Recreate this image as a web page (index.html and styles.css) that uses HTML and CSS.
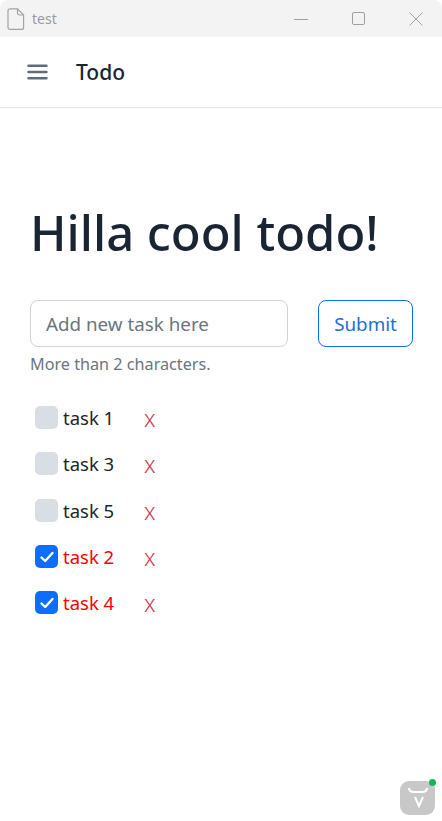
FILE: index.html
```html
<!DOCTYPE html>
<html lang="en">
<head>
  <meta charset="UTF-8">
  <title>test</title>
  <link rel="stylesheet" href="styles.css">
</head>
<body>

  <div class="titlebar">
    <svg class="file-icon" width="18" height="22" viewBox="0 0 18 22" fill="none" stroke="#a3a3a3" stroke-width="1.2">
      <path d="M3 .8h7.500L16.600 7v12.400a2 2 0 0 1-2 2H3a2 2 0 0 1-2-2V2.800a2 2 0 0 1 2-2z"/>
      <path d="M10.500 .8V5a2 2 0 0 0 2 2h4.100"/>
    </svg>
    <span class="window-title">test</span>
    <div class="window-controls">
      <svg width="14" height="14" viewBox="0 0 14 14" stroke="#a0a0a0" fill="none"><path d="M0 7.500h14"/></svg>
      <svg width="14" height="14" viewBox="0 0 14 14" stroke="#a0a0a0" fill="none"><rect x=".5" y=".5" width="12" height="12" rx="1.500"/></svg>
      <svg width="14" height="14" viewBox="0 0 14 14" stroke="#a0a0a0" fill="none"><path d="M.5 .5l13 13M13.500 .5l-13 13"/></svg>
    </div>
  </div>

  <nav class="navbar">
    <svg class="menu-icon" width="22" height="16" viewBox="0 0 22 16" stroke="#5f6b7a" stroke-width="2.400" stroke-linecap="round">
      <path d="M1.500 1.800h18M1.500 8h18M1.500 14.200h18"/>
    </svg>
    <span class="brand">Todo</span>
  </nav>

  <main class="content">
    <h1>Hilla cool todo!</h1>

    <div class="new-task">
      <input type="text" class="task-input" placeholder="Add new task here">
      <button class="submit">Submit</button>
    </div>
    <p class="help">More than 2 characters.</p>

    <ul class="tasks">
      <li class="task"><span class="box"></span><span class="name">task 1</span><span class="remove">x</span></li>
      <li class="task"><span class="box"></span><span class="name">task 3</span><span class="remove">x</span></li>
      <li class="task"><span class="box"></span><span class="name">task 5</span><span class="remove">x</span></li>
      <li class="task done">
        <span class="box"><svg width="16" height="14" viewBox="0 0 16 14" fill="none" stroke="#fff" stroke-width="2.400" stroke-linecap="round" stroke-linejoin="round"><path d="M2.500 7.500l3.700 3.500L13.500 3"/></svg></span>
        <span class="name">task 2</span><span class="remove">x</span>
      </li>
      <li class="task done">
        <span class="box"><svg width="16" height="14" viewBox="0 0 16 14" fill="none" stroke="#fff" stroke-width="2.400" stroke-linecap="round" stroke-linejoin="round"><path d="M2.500 7.500l3.700 3.500L13.500 3"/></svg></span>
        <span class="name">task 4</span><span class="remove">x</span>
      </li>
    </ul>
  </main>

  <div class="dev-badge">
    <svg width="20" height="24" viewBox="0 0 20 24" fill="none" stroke="#fff" stroke-width="2">
      <path d="M1 2c0 3 2 4 5 4h8c3 0 5-1 5-4"/>
      <path d="M7 11l4 9 4-9"/>
    </svg>
    <span class="dev-dot"></span>
  </div>

</body>
</html>
```

FILE: styles.css
```css
* { box-sizing: border-box; }
html, body { height: 100%; }
body { margin: 0; background: #fff; font-family: "Noto Sans", "Open Sans", sans-serif; color: #1a2433; overflow: hidden; }

.titlebar { height: 37px; background: #f3f3f3; display: flex; align-items: center; padding-left: 7px; border-radius: 8px 8px 0 0; }
.file-icon { flex: none; }
.window-title { margin-left: 7px; font-size: 14px; color: #9a9a9a; }
.window-controls { margin-left: auto; display: flex; gap: 43px; padding-right: 19px; }
.window-controls svg:first-child { margin-right: 1px; }

.navbar { height: 71px; display: flex; align-items: center; padding-left: 27px; border-bottom: 1px solid #e6e6e6; }
.brand { margin-left: 27px; font-size: 21px; font-weight: 500; }

.content { padding: 0 29px 0 30px; }
h1 { margin: 90px 0 0; font-size: 48.900px; line-height: 68px; font-weight: 500; }

.new-task { display: flex; justify-content: space-between; margin-top: 34px; }
.task-input { width: 258px; height: 47px; padding: 0 15px; border: 1px solid #ced4da; border-radius: 8px; font: inherit; font-size: 18.800px; color: #1a2433; }
.task-input::placeholder { color: #6c757d; opacity: 1; }
.submit { width: 95px; height: 47px; padding: 0; border: 1px solid #0d6efd; border-radius: 8px; background: #fff; color: #1a6fd8; font: inherit; font-size: 18.800px; }

.help { margin: 5px 0 0; font-size: 16.200px; line-height: 24px; color: #6c757d; }

.tasks { list-style: none; margin: 18.500px 0 0; padding: 0; }
.task { display: flex; align-items: center; height: 46.300px; padding-left: 5px; font-size: 18.500px; color: #212529; }
.box { flex: none; width: 23px; height: 23px; border-radius: 5px; background: #d8dee4; display: flex; align-items: center; justify-content: center; }
.name { width: 82px; margin-left: 5px; }
.remove { color: #d23a4c; font-size: 23px; font-weight: 300; line-height: 1; margin: 2px 0 0 -1px; }
.done .box { background: #0d6efd; }
.done .name { color: #f00; }

.dev-badge { position: absolute; right: 7px; bottom: 6px; width: 35px; height: 34px; border-radius: 9px; background: #c8c8c8; display: flex; align-items: center; justify-content: center; }
.dev-dot { position: absolute; top: -2px; right: -1px; width: 7px; height: 7px; border-radius: 50%; background: #16b35a; }
```
